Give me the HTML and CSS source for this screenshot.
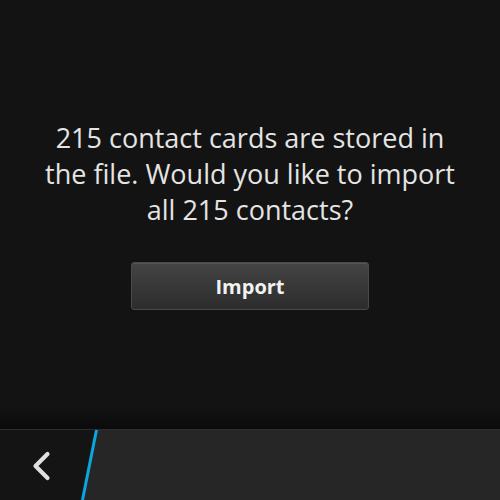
FILE: index.html
```html
<!DOCTYPE html>
<html>
<head>
<meta charset="utf-8">
<link rel="stylesheet" href="styles.css">
</head>
<body>
<div class="screen">
  <main class="content">
    <p class="message">215 contact cards are stored in<br>the file. Would you like to import<br>all 215 contacts?</p>
    <button class="btn">Import</button>
  </main>
  <footer class="actionbar">
    <div class="back">
      <svg width="24" height="32" viewBox="0 0 24 32"><path d="M17.5 4 L5.5 16 L17.5 28" fill="none" stroke="#e0e0e0" stroke-width="4.2" stroke-linecap="round" stroke-linejoin="round"/></svg>
    </div>
    <div class="rest">
      <svg class="slash" width="20" height="70" viewBox="0 0 20 70" preserveAspectRatio="none"><polygon points="14,0 20,0 20,70 0,70" fill="#262626"/><line x1="15.5" y1="0" x2="1.5" y2="70" stroke="#0aa6e0" stroke-width="3"/></svg>
      <div class="fill"></div>
    </div>
  </footer>
</div>
</body>
</html>
```
FILE: styles.css
```css
html, body {
  margin: 0;
  padding: 0;
  background: #131313;
}
.screen {
  width: 500px;
  height: 500px;
  display: flex;
  flex-direction: column;
  background: #131313;
  font-family: "Open Sans", "Noto Sans", sans-serif;
}
.content {
  flex: 1;
  display: flex;
  flex-direction: column;
  align-items: center;
  padding-top: 120px;
  background: linear-gradient(to bottom, #131313 0, #131313 405px, #0b0b0b 429px);
}
.message {
  margin: 0;
  width: 480px;
  text-align: center;
  color: #e4e4e4;
  font-size: 27px;
  line-height: 36px;
  letter-spacing: 0;
}
.btn {
  margin-top: 34px;
  width: 238px;
  height: 48px;
  border: 1px solid #4a4a4a;
  border-radius: 3px;
  background: linear-gradient(to bottom, #444 0, #2c2c2c 100%);
  color: #f2f2f2;
  font-family: "Open Sans", "Noto Sans", sans-serif;
  font-weight: 700;
  font-size: 20px;
  box-shadow: inset 0 1px 0 #555;
}
.actionbar {
  height: 70px;
  display: flex;
  border-top: 1px solid #2e2e2e;
  background: #141414;
}
.back {
  width: 81px;
  display: flex;
  align-items: center;
  justify-content: center;
}
.back svg {
  margin-left: 2px;
  margin-top: 1px;
}
.rest {
  flex: 1;
  display: flex;
}
.slash {
  display: block;
  width: 20px;
  height: 70px;
}
.fill {
  flex: 1;
  background: #262626;
}
```
